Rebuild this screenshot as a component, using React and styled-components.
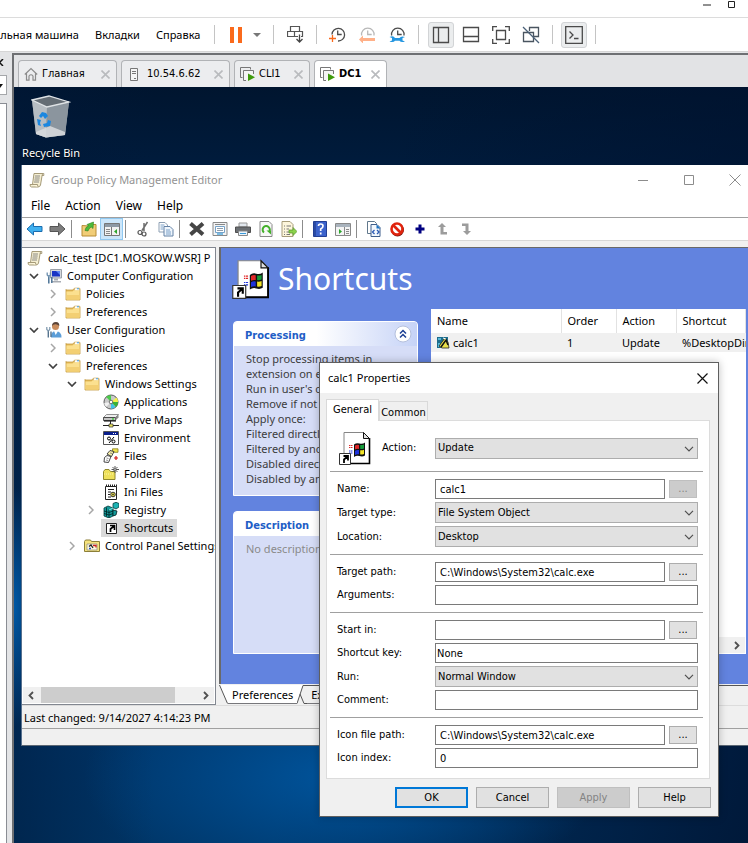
import React from "react";
import styled, { createGlobalStyle, css } from "styled-components";

const UI = `"Noto Sans", "Open Sans", sans-serif`;
const DLG = `"DejaVu Sans Condensed", "DejaVu Sans", sans-serif`;

const Global = createGlobalStyle`
  * { box-sizing: border-box; }
  body { margin: 0; background: #e3e4e6; overflow: hidden; font: 11px/18px ${UI}; color: #000; }
  button, input, select { font: inherit; color: inherit; margin: 0; }
  ul { list-style: none; margin: 0; padding: 0; }
`;

/* ---------- host application chrome ---------- */
const Shell = styled.div`
  display: flex; flex-direction: column; height: 100vh; overflow: hidden;
`;
const HostTitle = styled.header`
  display: flex; justify-content: flex-end; gap: 17px; height: 18px; flex: none; padding-right: 12px;
  background: #fff; border-bottom: 1px solid #dcdcdc;
`;
const HostBar = styled.div`
  display: flex; align-items: center; height: 34px; flex: none; background: #fff; border-bottom: 1px solid #d6d6d6;
  white-space: nowrap; overflow: hidden;
`;
const HostMenu = styled.nav`
  display: flex; gap: 16px; width: 213px; height: 32px; align-items: center;
`;
const HostMenuItem = styled.button`
  border: 0; background: none; padding: 0; flex: none;
`;
const CutMenuItem = styled(HostMenuItem)`
  display: flex; width: 79px; justify-content: flex-end; overflow: hidden;
`;
const HostSep = styled.span`
  width: 1px; height: 19px; flex: none; background: #c4c4c4; margin: 0 ${p => p.$after || 9}px 0 ${p => p.$before || 9}px;
`;
const HostTool = styled.button`
  display: flex; align-items: center; justify-content: center; flex: none; padding: 0;
  width: ${p => p.$w || 30}px; height: 26px; border: 0; background: none; border-radius: 3px;
  ${p => p.$on && css`background: #ebedee; border: 1px solid #d2d4d6; width: 26px; margin: 0 2px;`}
`;
const Main = styled.div`display: flex; flex: 1; padding-top: 1px; min-height: 0;`;
const Side = styled.aside`
  width: 7px; flex: none; display: flex; flex-direction: column; padding-top: 6px; overflow: hidden;
`;
const SideBox = styled.div`
  height: 20px; margin-top: 9px; background: #fff; border: 1px solid #a5a7aa; border-left: 0;
`;
const SidePanel = styled.div`
  flex: 1; margin-top: 8px; background: #fff; border: 1px solid #8a8d94; border-left: 0; border-bottom: 0;
`;
const Viewer = styled.main`
  flex: 1; min-width: 0; margin-left: 5px; display: flex; flex-direction: column;
  border: 2px solid #6e7073; border-right: 0; border-bottom: 0;
`;
const Tabs = styled.div`
  display: flex; gap: 4px; padding: 5px 4px 0; background: #e2e3e5;
  font: 11px/14px ${DLG};
`;
const Tab = styled.div`
  display: flex; align-items: center; width: ${p => p.$w}px; height: 27px; padding: 0 6px 0 5px; gap: 4px;
  border: 1px solid #b1b3b6; border-bottom: 0; border-radius: 4px 4px 0 0;
  background: ${p => (p.$on ? "#fff" : "#ecedef")}; font-weight: ${p => (p.$on ? 700 : 400)};
`;
const TabLabel = styled.button`
  display: flex; align-items: center; gap: ${p => p.$gap || 4}px; border: 0; background: none; padding: 0;
  font-weight: inherit; white-space: nowrap; flex: 1;
`;
const IconButton = styled.button`
  display: flex; border: 0; background: none; padding: 0;
`;

/* ---------- guest desktop ---------- */
const Desktop = styled.section`
  position: relative; flex: 1; overflow: hidden;
  background:
    radial-gradient(ellipse 260px 120px at 330px 690px, #00549c 0%, transparent 100%),
    radial-gradient(ellipse 26px 120px at 0 520px, #0059a6 0%, transparent 100%),
    linear-gradient(90deg, rgba(0, 24, 56, 0.5) 0, transparent 140px),
    linear-gradient(100deg, transparent 45%, rgba(0, 18, 47, 0.8) 100%),
    linear-gradient(180deg, #00152f 0, #001f44 120px, #00356a 620px, #003566 100%);
`;
const DesktopIcon = styled.button`
  display: flex; flex-direction: column; align-items: center; width: 74px; padding: 8px 0 0; border: 0;
  background: none; color: #fff; gap: 6px; line-height: 16px; white-space: nowrap;
  text-shadow: 0 1px 1px #000;
`;
const Window = styled.section`
  position: absolute; left: 7px; right: 0; top: 78px; background: #f0f0f0;
  border-bottom: 1px solid #5a6673; border-left: 1px solid #56708e;
`;
const TitleBar = styled.header`
  display: flex; align-items: center; height: 30px; padding: 0 7px; background: #fff; color: #939393;
`;
const TitleText = styled.h1`
  flex: 1; margin: 0 0 0 6px; font-size: 11px; font-weight: 400; white-space: nowrap;
`;
const Caption = styled.div`display: flex; gap: 34px;`;
const MenuBar = styled.nav`
  display: flex; gap: 15px; height: 23px; padding: 0 9px; align-items: center; background: #fff;
  border-bottom: 1px solid #a0a0a0;
`;
const MenuItem = styled.button`border: 0; background: none; padding: 0; font-size: 12px;`;
const ToolBar = styled.div`
  display: flex; align-items: center; height: 23px; padding-left: 1px; background: #fff;
  border-bottom: 1px solid #d7d7d7;
`;
const Tool = styled.button`
  display: flex; align-items: center; justify-content: center; width: 23px; height: 22px; flex: none;
  padding: 0; border: 1px solid ${p => (p.$on ? "#90c8f0" : "transparent")};
  background: ${p => (p.$on ? "#cce6fa" : "none")};
`;
const ToolSep = styled.span`width: 1px; height: 18px; margin: 0 5px 0 2px; background: #8c8c8c;`;
const Panes = styled.div`display: flex; height: 458px; margin-top: 6px;`;
const TreePane = styled.div`
  display: flex; flex-direction: column; width: 194px; flex: none; background: #fff; border: 1px solid #828790;
  border-left: 0; overflow: hidden;
`;
const Tree = styled.ul`flex: 1; padding-top: 1px; overflow: hidden;`;
const TreeRow = styled.li`
  display: flex; height: 18px; align-items: center;
  padding-left: ${p => (p.$level ? (p.$level - 1) * 19 + 2 : 3)}px;
`;
const Twisty = styled.span`display: flex; justify-content: center; width: 20px; flex: none;`;
const TreeItem = styled.button`
  display: flex; align-items: center; gap: 5px; height: 18px; padding: 0 4px 0 2px; border: 0; white-space: nowrap;
  background: ${p => (p.$on ? "#d9d9d9" : "none")};
`;
const HScroll = styled.div`
  display: flex; height: 16px; margin: 0 1px 1px; padding: 0 5px; align-items: center; background: #f0f0f0; flex: none;
  justify-content: ${p => (p.$end ? "flex-end" : "space-between")};
`;
const Thumb = styled.div`flex: 1; height: 16px; margin: 0 28px 0 7px; background: #cdcdcd;`;
const Detail = styled.div`flex: 1; min-width: 0; margin-left: 3px; display: flex; flex-direction: column;`;
const Blue = styled.div`
  flex: 1; background: #6283df; border-top: 1px solid #696969; border-left: 2px solid #696969;
  padding: 10px 2px 30px 11px; display: flex; flex-direction: column;
`;
const Banner = styled.div`
  display: flex; align-items: center; gap: 8px; height: 42px; color: #fff;
`;
const BannerText = styled.h2`margin: 0; font-size: 30px; line-height: 40px; font-weight: 400;`;
const BlueRow = styled.div`display: flex; flex: 1; gap: 13px; margin: 9px 0 0 1px;`;
const Cards = styled.div`display: flex; flex-direction: column; gap: 15px; width: 185px; flex: none; padding-top: 12px;`;
const Card = styled.section`
  display: flex; flex-direction: column; border: 1px solid #fff; border-radius: 4px 4px 0 0; background: #d6ddf7;
  ${p => p.$grow && css`flex: 1;`}
`;
const CardHead = styled.header`
  display: flex; align-items: center; justify-content: space-between; height: 24px; padding: 0 5px 0 11px;
  background: linear-gradient(90deg, #fff 45%, #c6d3f7); border-radius: 3px 3px 0 0;
`;
const CardTitle = styled.h3`margin: 0; padding-top: 3px; font: 700 11px/16px ${DLG}; color: #215dc6;`;
const CardBody = styled.div`
  padding: 5px 0 9px 12px; line-height: 15px; color: ${p => (p.$dim ? "#8a8a8a" : "#3c3c3c")};
  white-space: nowrap; overflow: hidden;
`;
const CardLine = styled.div`height: 15px;`;
const ListPane = styled.div`flex: 1; min-width: 0; overflow: hidden; background: #fff; display: flex; flex-direction: column;`;
const ListScroll = styled.div`flex: 1; overflow: hidden;`;
const Table = styled.table`
  width: 100%; border-collapse: collapse; table-layout: fixed; white-space: nowrap;
`;
const Th = styled.th`
  width: ${p => p.$w || "auto"}; height: 24px; padding: 0 6px; text-align: left; font-weight: 400;
  border-right: 1px solid #e2e2e2;
`;
const Td = styled.td`
  height: 19px; padding: 0 0 0 6px; background: #f0f0f0; line-height: 18px;
`;
const NameCell = styled.span`display: flex; align-items: center; gap: 3px;`;
const BottomTabs = styled.div`display: flex; height: 21px; padding-top: 1px; background: #f0f0f0;`;
const BottomTab = styled.button`
  display: flex; height: 19px; border: 0; padding: 0; background: none; line-height: 18px;
`;
const BottomTabText = styled.span`
  background: ${p => (p.$on ? "#fff" : "#f0f0f0")}; padding: 0 4px; border-bottom: 1px solid #77777b;
  border-top: 1px solid ${p => (p.$on ? "#fff" : "#555")};
`;
const BottomRest = styled.div`flex: 1; border-top: 1px solid #555;`;
const Status = styled.footer`
  height: 24px; padding: 3px 2px; border-top: 1px solid #dcdcdc; border-bottom: 1px solid #a0a0a0;
`;
const StatusRest = styled.div`height: 16px;`;

/* ---------- properties dialog ---------- */
const Dialog = styled.section`
  position: absolute; left: 305px; top: 275px; width: 400px; background: #f0f0f0; border: 1px solid #5f5f5f;
  font: 11px/16px ${DLG}; box-shadow: 0 0 8px rgba(0, 0, 0, 0.25);
`;
const DialogTitle = styled.header`
  display: flex; align-items: center; justify-content: space-between; height: 30px; padding: 0 10px 0 8px;
  background: #fff; font-family: ${UI};
`;
const DialogTabs = styled.div`display: flex; align-items: flex-end; height: 27px; padding-left: 6px;`;
const DialogTab = styled.button`
  height: 19px; width: 49px; padding: 3px 0 0; border: 1px solid #d9d9d9; border-bottom: 0;
  background: #f0f0f0; text-align: center; white-space: nowrap;
  ${p => p.$on && css`margin-bottom: -1px; width: 53px; height: 22px; padding: 0 0 1px; background: #fff; z-index: 1;`}
`;
const Page = styled.form`
  margin: 0 8px 0 6px; padding: 0 11px 10px 3px; background: #fff; border: 1px solid #dcdcdc;
`;
const Group = styled.div`
  display: flex; flex-direction: column; gap: 3px; padding: 7px 5px 7px 7px; margin-right: -5px;
  border-top: 1px solid #a0a0a0;
  &:last-child { padding-bottom: 0; }
`;
const HeadGroup = styled(Group)`border-top: 0; padding-top: 10px; padding-bottom: 6px;`;
const Field = styled.div`
  display: grid; grid-template-columns: ${p => (p.$pic ? "43px 53px" : "98px")} 1fr; align-items: center;
  padding-left: ${p => (p.$pic ? 2 : 0)}px;
`;
const Label = styled.label`line-height: 20px;`;
const Controls = styled.div`display: flex; align-items: center; gap: 4px; position: relative;`;
const TextInput = styled.input`
  flex: 1; min-width: 0; height: 20px; padding: 0 ${p => (p.$tight ? 1 : 4)}px; border: 1px solid #7a7a7a; background: #fff; outline: none; border-radius: 0;
`;
const Select = styled.select`
  appearance: none; flex: 1; height: 21px; padding: 0 2px; border: 1px solid #adadad; background: #e1e1e1; border-radius: 0;
`;
const SelectArrow = styled.span`position: absolute; right: 4px; top: 8px; display: flex; pointer-events: none;`;
const Browse = styled.button`
  width: 28px; height: 18px; padding: 0; margin-right: 1px; border: 1px solid #adadad; background: #e1e1e1; line-height: 14px;
  &:disabled { background: #ccc; border-color: #bfbfbf; color: #838383; }
`;
const Footer = styled.footer`display: flex; justify-content: flex-end; gap: 8px; padding: 8px 7px;`;
const PushButton = styled.button`
  width: 73px; height: 21px; padding: 0; border: ${p => (p.$main ? "2px solid #0078d7" : "1px solid #adadad")};
  background: #e1e1e1; line-height: 16px;
  &:disabled { background: #ccc; border-color: #bfbfbf; color: #838383; }
`;

/* ---------- icons ---------- */
const Svg = ({ s = 16, w, h, vb, children }) => (
  <svg width={w || s} height={h || s} viewBox={vb || `0 0 ${w || s} ${h || s}`} fill="none" aria-hidden="true">{children}</svg>
);
const Cross = ({ s = 11, c = "#8c8c8c", w = 1 }) => (
  <Svg s={s}><path d={`M.5.5L${s - 0.5} ${s - 0.5}M${s - 0.5} .5L.5 ${s - 0.5}`} stroke={c} strokeWidth={w} /></Svg>
);
const Chevron = ({ open, c }) => open
  ? <Svg w={10} h={6}><path d="M1 1l4 4 4-4" stroke={c || "#404040"} strokeWidth="1.7" /></Svg>
  : <Svg w={6} h={10}><path d="M1 1l4 4-4 4" stroke={c || "#a6a6a6"} strokeWidth="1.5" /></Svg>;
const ScrollArrow = ({ left }) => (
  <Svg w={6} h={9}><path d={left ? "M5 1L1.500 4.500 5 8" : "M1 1l3.500 3.500L1 8"} stroke="#505050" strokeWidth="1.8" /></Svg>
);
const Scroll = () => (
  <Svg>
    <path d="M5 1.500h9.500q-1.500.5-1.500 2.500L11.500 13q-.5 2-2.500 2H2.500Q1 15 1 12.500h2.500z" fill="#f6efd2" stroke="#a59a78" />
    <path d="M1 12.500h7.500q0 2 1 2.500" stroke="#a59a78" fill="#fff8dd" />
    <path d="M6 4h5M5.700 6h5M5.400 8h5M5 10h5" stroke="#8a8a86" />
    <path d="M13 3.500h1.800V1.500" stroke="#a59a78" />
  </Svg>
);
const Folder = () => (
  <Svg>
    <path d="M1 3.500V14h14V2.500H9L8 4H1z" fill="#e7bd5a" stroke="#c49a3f" strokeWidth=".8" />
    <path d="M9.500 2h5v3h-5z" fill="#fff" stroke="#cba85a" strokeWidth=".6" /><path d="M12 2.300h2v1h-2z" fill="#3f9be0" />
    <path d="M1.400 5.500h6L9 4.300h5.600v9.300H1.400z" fill="#fbe08f" /><path d="M2 9h12.500v4.500H2z" fill="#f3cf73" />
  </Svg>
);
const Computer = () => (
  <Svg>
    <path d="M4.500 1.500h11v8.500h-11z" fill="#d5d8dc" stroke="#9aa0a8" /><path d="M6 3h8v5.500H6z" fill="#1a35c4" /><path d="M10 3h4v4z" fill="#5e86f2" />
    <path d="M8 10.500h4v2H8zM6 13h9v1.500H6z" fill="#a9adb4" />
    <path d="M2.800 9v6.500M5.800 9v6" stroke="#4d7396" strokeWidth="1.500" />
    <path d="M1.200 4.500v2.500l1.600 1.500 1.600-1.500V4.500" stroke="#6d8fae" strokeWidth="1.300" />
  </Svg>
);
const User = () => (
  <Svg>
    <circle cx="9.500" cy="4.500" r="3.500" fill="#c98c5d" /><path d="M6 4q0-4 4-4 3.500 0 3.300 4-2-2-4-1.800Q7 2.500 6 4z" fill="#594338" />
    <path d="M5 15.500Q5 9 9.500 9q6 0 6 6.500z" fill="#5c9ed8" /><path d="M8 9l1.700 4L12 9z" fill="#fff" />
    <path d="M2.300 9v6.500M5 9.500v5.500" stroke="#55738d" strokeWidth="1.400" />
    <path d="M.8 5v2.500L2.300 9l1.500-1.500V5" stroke="#7b95ab" strokeWidth="1.200" />
  </Svg>
);
const Disc = () => (
  <Svg>
    <circle cx="8" cy="8" r="7" fill="#c8c8c8" stroke="#5c5c5c" />
    <path d="M8 8L3 2.800A7 7 0 018 1.200z" fill="#4bcb4b" /><path d="M8 8l5.500-4.500A7 7 0 0115 8z" fill="#f4f04a" />
    <path d="M8 8l4.500 5A7 7 0 018 14.800z" fill="#3ec3e8" /><path d="M8 8l5 5q2-2 2-5z" fill="#38b338" /><path d="M8 8L1.200 9q0 2 2 4z" fill="#f0f0f0" />
    <circle cx="8" cy="8" r="1.800" fill="#fff" stroke="#555" strokeWidth=".8" />
  </Svg>
);
const Drive = () => (
  <Svg>
    <path d="M3.500 2.500h12l-3 3H.5z" fill="#eee" stroke="#777" strokeWidth=".8" /><path d="M.5 5.500h12v3H.5z" fill="#c4c4c4" stroke="#333" strokeWidth=".8" />
    <path d="M12.500 5.500l3-3v3l-3 3z" fill="#888" /><path d="M9 7h2" stroke="#0c0" /><path d="M1 9h12" stroke="#000" />
    <path d="M7.500 9v3M0 13.500h6M10 13.500h6" stroke="#222" /><path d="M6 12h4v3H6z" fill="#e7e05c" stroke="#333" strokeWidth=".7" />
  </Svg>
);
const Env = () => (
  <Svg>
    <path d="M.5 1.500h15v13H.5z" fill="#fff" stroke="#555" /><path d="M1 2h14v3H1z" fill="#0a1e8c" /><path d="M10 3.500h1M12 3.500h1" stroke="#fff" />
    <circle cx="6" cy="8.500" r="1.500" stroke="#000" /><circle cx="10.500" cy="11.500" r="1.500" stroke="#000" /><path d="M11 7l-5 6" stroke="#000" />
  </Svg>
);
const Files = () => (
  <Svg>
    <path d="M9.500 .8h5.500v3.500H9.500z" fill="#f1e44e" stroke="#857c1d" strokeWidth=".8" />
    <path d="M1.500 9.500l2.500-2 4 1-2.500 6-4.500-.500z" fill="#fff" stroke="#333" strokeWidth=".9" />
    <path d="M4 6l3-3.500 4 1L8.500 8.500z" fill="#f6eeaa" stroke="#333" strokeWidth=".9" />
    <path d="M3.500 10l2 .5M3 12l2 .5M7 5l2 .500" stroke="#777" strokeWidth=".8" />
    <path d="M11 10h4M13 8v4" stroke="#d21414" strokeWidth="1.200" />
  </Svg>
);
const NewFolder = () => (
  <Svg>
    <path d="M.5 13.500v-8l1.500-2h4l1.500 2h4.500v8z" fill="#eee05a" stroke="#90882c" /><path d="M1 8h10" stroke="#fbf6b0" strokeDasharray="1 1" />
    <path d="M12 0v7M8.500 3.500H16M9.500 1l5 5M14.500 1l-5 5" stroke="#444" strokeWidth=".9" /><path d="M11.500 3h1v1h-1z" fill="#fff" />
  </Svg>
);
const Ini = () => (
  <Svg>
    <path d="M2.500 2.500h11v13h-11z" fill="#fff" stroke="#222" /><path d="M3 1.500h11" stroke="#222" strokeWidth="2" strokeDasharray="1 1" />
    <path d="M5 5.500h6M5 8h3M5 10.500h2M5 13h3" stroke="#222" /><circle cx="10" cy="10.500" r="2.300" fill="#e8dc42" stroke="#333" /><path d="M10 9.500v2M9 10.500h2" stroke="#333" strokeWidth=".7" />
  </Svg>
);
const Registry = () => (
  <Svg>
    <path d="M1 6l4-2 5 2v8l-4 2-5-2z" fill="#139a9a" stroke="#043c3c" strokeWidth=".8" /><path d="M10 1.500l3-1.200L16 1.500v3.500L13 7l-3-1.500z" fill="#1cb3b3" stroke="#043c3c" strokeWidth=".8" />
    <path d="M10 8l4 1-1 4-3 1z" fill="#139a9a" />
    <path d="M6 7.500V16M3.500 5.500v9M1 9l5 1.500L10 9M1 11.500L6 13l4-1.500M10 8l4 1-1 4-3 1z" stroke="#022" strokeWidth=".8" />
    <path d="M6 8l4-2" stroke="#7fe8e8" />
  </Svg>
);
const ShortcutIcon = () => (
  <Svg>
    <path d="M3.500 3.500h10v10h-10z" fill="#fff" stroke="#222" /><path d="M7 5.500h4.500V10M11 6L7.500 9v3" stroke="#000" strokeWidth="1.700" />
  </Svg>
);
const ControlPanel = () => (
  <Svg>
    <path d="M.5 13.500v-10l1-1.500h5l1 1.500h8v10z" fill="#f5e27c" stroke="#8c7f38" /><path d="M3 6h10v6H3z" fill="#fffbe0" stroke="#888" strokeWidth=".7" />
    <path d="M5 8.500l2-1.500 2 3" stroke="#222" strokeWidth="1.300" /><path d="M9 7.500h3v2" stroke="#c22" strokeWidth="1.300" /><path d="M5 10.500h2" stroke="#2358c8" strokeWidth="1.300" />
  </Svg>
);
const CalcIcon = () => (
  <Svg s={13}>
    <path d="M0 1h11v11H0z" fill="#1d6d8c" /><path d="M1 2h3v2H1zM1 7h2v4H1z" fill="#58b8d8" /><path d="M2 10L8 2l3 4 1 6H5z" fill="#e8e04a" stroke="#222" strokeWidth=".8" />
    <path d="M4 11l5-7 2 5" stroke="#111" strokeWidth="1.500" /><path d="M6 2l3 1" stroke="#fff" />
  </Svg>
);
const FlagPage = ({ w, h }) => (
  <Svg w={w} h={h} vb="0 0 32 34">
    <path d="M5 1.500h19.500l6 6V32.500H5z" fill="#fff" stroke="#868686" />
    <path d="M30.500 7v25.500H7" stroke="#000" strokeWidth="1.600" /><path d="M24.500 1.500v6h6z" fill="#e0e0e0" stroke="#111" />
    <path d="M15 13.500q2.500-2 5.500-1t5.500-1v13q-2.500 1.500-5.500.5t-5.500 1z" fill="#111" />
    <path d="M16 14.500q2-1.200 4-.6v4q-2-.5-4 .6z" fill="#e02828" />
    <path d="M21.200 14q2 .3 3.800-.5v4q-1.800.8-3.800.5z" fill="#169c3a" />
    <path d="M16 19.700q2-1.200 4-.6v4.200q-2-.5-4 .6z" fill="#1d32dc" />
    <path d="M21.200 19.200q2 .3 3.800-.5v4.200q-1.800.8-3.800.5z" fill="#f3e526" />
    <path d="M10 14.500h4M10 16.500h4" stroke="#e02828" strokeDasharray="1 .5 2 .5" />
    <path d="M10 20h4M10 22h4" stroke="#1d32dc" strokeDasharray="1 .5 2 .5" />
    <path d="M.5 22.500h11v11H.5z" fill="#fff" stroke="#333" /><path d="M4.500 25h4.500v4.500M8.500 25.500L5 28.500v3.500" stroke="#000" strokeWidth="1.800" />
  </Svg>
);
const RecycleBin = () => (
  <Svg w={40} h={44}>
    <path d="M1 5l17-4 20 6-4 33-19 2.500L5 39z" fill="#9aa3ab" /><path d="M1 5l15 7-1 30.500L5 39z" fill="#b6bdc3" />
    <path d="M16 12l22-5-4 33-19 2.500z" fill="#8b959e" /><path d="M1 5l17-4 20 6-22 5z" fill="#646d75" stroke="#dfe3e6" strokeWidth="1.300" />
    <path d="M5 37l14-6 15 6v3l-19 2.500L5 39z" fill="#d9dcde" opacity=".85" />
    <path d="M8 21l3-4 4 1 2 3-3 3-2-3-2 2zM6 24l4 1-1 3 1 3-3-1zM13 32l6-1 1-5-3-1-1 3-4 1z" fill="#1b87e0" />
  </Svg>
);
const HomeIcon = () => (
  <Svg s={14}><path d="M.8 7.500L7 1.500l6.200 6M2.500 6.500v6.700h2.500V9q2-2.500 4 0v4.200h2.500V6.500" stroke="#8c8c8c" strokeWidth="1.200" /></Svg>
);
const ServerIcon = () => (
  <Svg w={14} h={13}><path d="M3.500.5h7v12h-7z" stroke="#777" fill="#f5f5f5" /><path d="M5 3.500h4M5 5.500h4M7 10.500h2" stroke="#777" /></Svg>
);
const VmIcon = () => (
  <Svg w={15} h={14}>
    <path d="M2.500 10.500h-2v-10h10v2" stroke="#777" /><path d="M6 13.500H3.500v-10h10V7" stroke="#777" fill="#f4f4f4" /><path d="M8 6.500v7.500l7-3.800z" fill="#3f9a0c" />
  </Svg>
);
const PauseIcon = () => <Svg w={12} h={16}><path d="M0 0h4v16H0zM8 0h4v16H8z" fill="#fa6a1c" /></Svg>;
const Caret = () => <Svg w={8} h={4}><path d="M0 0h8L4 4z" fill="#777" /></Svg>;
const SendKeys = () => (
  <Svg w={17} h={17}><path d="M3.500 .5h9v5h-9zM.5 5.500h7v5h-7zM7.500 5.500h8v5h-8z" stroke="#555" strokeWidth="1.200" /><path d="M12.500 8v8M9.500 12.500l3 3 3-3" stroke="#fff" strokeWidth="3" /><path d="M12.500 8.500v7.500M9.500 13l3 3 3-3" stroke="#444" strokeWidth="1.300" /></Svg>
);
const Clock = ({ tone = "#4c4c4c", kind }) => (
  <Svg w={17} h={17}>
    <path d={kind === "add" ? "M3 8.500A6.300 6.300 0 119 15" : "M2.600 9.500A6.300 6.300 0 1115 9.500"} stroke={tone} strokeWidth="1.300" /><path d="M8.700 4.500v4h4" stroke={tone} strokeWidth="1.300" />
    {kind === "add" && <path d="M0 12.500h7M3.500 9v7" stroke="#fa6a1c" strokeWidth="1.300" />}
    {kind === "back" && <path d="M0 13.500l4-4v2.500h12v3H4v2.500z" fill="#ffb088" />}
    {kind === "manage" && <path d="M.500 11q4-1.800 5.500 1h4.500q1.500-2.500 5.500-1l-2.500 1v2.500l2.500 1q-4 1.500-5.500-.8H6q-1.500 2.300-5.500.8l2.500-1V12z" fill="#2496e0" />}
  </Svg>
);
const Frame = ({ d }) => <Svg w={18} h={18}><path d={d} stroke="#4a4a4a" strokeWidth="1.300" /></Svg>;
const Unity = () => (
  <Svg w={18} h={18}><path d="M7.500 5V1.500h9v9H12M1.500 6.500h10v9h-10z" stroke="#4a5560" strokeWidth="1.300" /><path d="M1 1l16 16" stroke="#4a6078" strokeWidth="1.200" /></Svg>
);

const Arrow = ({ right }) => right
  ? <Svg w={17} h={14}><path d="M16 7L9.500 1v3.500H1v5h8.500V13z" fill="#7d7d7d" stroke="#555" /></Svg>
  : <Svg w={17} h={14}><path d="M1 7l6.500-6v3.500H16v5H7.500V13z" fill="#3fb0f0" stroke="#1b6cae" /></Svg>;
const toolIcons = {
  back: <Arrow />,
  forward: <Arrow right />,
  up: <Svg><path d="M1 4.500V15h14V3.500H9L8 5z" fill="#f1cd77" stroke="#b78c35" /><path d="M4 9.500l1-3 2.500-1.500L6 3.500 12.500 1l-.5 6.500-1.800-1.500q-2.500 1.500-3.200 4z" fill="#4dbb3a" stroke="#2c7f20" strokeWidth=".6" /></Svg>,
  tree: <Svg><path d="M.5 2.500h15v12H.5z" fill="#f2f2f2" stroke="#777" /><path d="M1 3h14v3H1z" fill="#8d99a5" /><path d="M2 8.500h4M2 10.500h4M2 12.500h4" stroke="#8a8a8a" /><path d="M7.500 6v8" stroke="#777" /><path d="M13 8v5l-3-2.500z" fill="#2ba52b" /></Svg>,
  cut: <Svg><path d="M12.500 1L7 9.500M9 2v8" stroke="#6d6d6d" strokeWidth="1.500" /><circle cx="5" cy="11.500" r="2" stroke="#555" strokeWidth="1.200" /><circle cx="9" cy="13" r="2" stroke="#555" strokeWidth="1.200" /></Svg>,
  copy: <Svg><path d="M1 1.500h6l2.500 2.500v7H1z" fill="#fff" stroke="#8ea0b4" /><path d="M6 5.500h6l3 3v6.500H6z" fill="#eef5fc" stroke="#6482a6" /><path d="M2.500 4h4M2.500 6h3M2.500 8h3M8 9h4M8 11h5M8 13h5" stroke="#7aa0c8" /></Svg>,
  del: <Svg><path d="M1.500 2.500L14 13.500M14 2.500L1.500 13.500" stroke="#454545" strokeWidth="4" /></Svg>,
  props: <Svg><path d="M1 1.500h14v13H1z" fill="#f4f4f4" stroke="#888" /><path d="M3 3.500h10" stroke="#888" /><path d="M3.500 5.500h9v6h-9z" fill="#fff" stroke="#77a3c8" /><path d="M5 7.500h6M5 9.500h6" stroke="#8f9dab" /><path d="M5 13h6" stroke="#53a8dc" strokeWidth="1.500" /></Svg>,
  print: <Svg><path d="M4 2h8v4H4z" fill="#e2e8ee" stroke="#999" /><path d="M.5 6h15v5.500H.5z" fill="#6b6f73" stroke="#505050" /><path d="M3.500 10h9v4.500h-9z" fill="#eaf4fc" stroke="#888" /><path d="M5 12.500h6" stroke="#3b9ada" /></Svg>,
  refresh: <Svg><path d="M2 .5h9l3 3v12H2z" fill="#f8f8f8" stroke="#888" /><path d="M6 11.500a3.600 3.600 0 115-.5" stroke="#43b02a" strokeWidth="2" /><path d="M8.500 9.500h4.500v4z" fill="#43b02a" /></Svg>,
  exp: <Svg><path d="M1 .5h8l3 3v12H1z" fill="#fdf6dc" stroke="#a79c7a" /><path d="M3 5h1M5.500 5H10M3 8h1M5.500 8H8M3 11h1M5.500 11H8M3 13.500h1M5.500 13.500H9" stroke="#777" /><path d="M8 9h4V6.500l4 4-4 4V12H8z" fill="#8bd24a" stroke="#56942a" strokeWidth=".7" /></Svg>,
  help: <Svg><path d="M1.500.5h13v15h-13z" fill="#3c63cc" stroke="#233f94" /><path d="M2 1h2v14H2z" fill="#2a4aa4" /><path d="M6.500 5q0-2 2.200-2Q11 3 11 5t-2.300 3v2M8.700 11.500v2" stroke="#fff" strokeWidth="1.700" /></Svg>,
  action: <Svg><path d="M.5 2.500h15v12H.5z" fill="#f4f4f4" stroke="#888" /><path d="M1 3h14v3H1z" fill="#a9b3bd" /><path d="M9.500 6v8M11 8.500h3M11 10.500h3M11 12.500h3" stroke="#8a8a8a" /><path d="M4 8v5l3-2.500z" fill="#2ba52b" /></Svg>,
  xml: <Svg><path d="M1.500.5h7l2 2v10h-9z" fill="#fff" stroke="#61788c" /><path d="M5 3.500h6l3 3v9H5z" fill="#f3f8fd" stroke="#3f5f8c" /><path d="M10.500 3.500l4 4h-4z" fill="#1a71c2" /><path d="M8.500 9l-2 2 2 2M11 9l2 2-2 2" stroke="#2b5bb5" strokeWidth="1.300" /></Svg>,
  stop: <Svg><circle cx="8.500" cy="9" r="6.500" fill="#7a1a14" /><circle cx="8" cy="8" r="5.500" fill="#fff" stroke="#e0240e" strokeWidth="2.600" /><path d="M4 4l8 8" stroke="#e0240e" strokeWidth="2.600" /></Svg>,
  plus: <Svg><path d="M8 3.500v9M3.500 8h9" stroke="#000080" strokeWidth="3" /></Svg>,
  arrowUp: <Svg><path d="M7 2l4 4H8.500v5H12v2.500H5.500V6H3z" fill="#9c9c9c" /></Svg>,
  arrowDown: <Svg><path d="M9 14L5 10h2.500V5H4V2.500h6.500V10H13z" fill="#9c9c9c" /></Svg>,
};
const tools = ["back", "forward", "|", "up", "tree", "|", "cut", "copy", "|", "del", "props", "print", "refresh", "exp", "|", "help", "action", "|", "xml", "stop", "plus", "arrowUp", "arrowDown"];

const treeData = [
  ["root", 0, null, Scroll, "calc_test [DC1.MOSKOW.WSR] P"],
  ["computer", 1, true, Computer, "Computer Configuration"],
  ["c-policies", 2, false, Folder, "Policies"],
  ["c-preferences", 2, false, Folder, "Preferences"],
  ["user", 1, true, User, "User Configuration"],
  ["u-policies", 2, false, Folder, "Policies"],
  ["u-preferences", 2, true, Folder, "Preferences"],
  ["windows", 3, true, Folder, "Windows Settings"],
  ["apps", 4, null, Disc, "Applications"],
  ["drives", 4, null, Drive, "Drive Maps"],
  ["env", 4, null, Env, "Environment"],
  ["files", 4, null, Files, "Files"],
  ["folders", 4, null, NewFolder, "Folders"],
  ["ini", 4, null, Ini, "Ini Files"],
  ["registry", 4, false, Registry, "Registry"],
  ["shortcuts", 4, null, ShortcutIcon, "Shortcuts"],
  ["control", 3, false, ControlPanel, "Control Panel Settings"],
];

const TextField = ({ id, label, value = "", browse, disabled, tight }) => (
  <Field>
    <Label htmlFor={id}>{label}</Label>
    <Controls>
      <TextInput id={id} defaultValue={value} $tight={tight} />
      {browse && <Browse type="button" disabled={disabled} aria-label={`Browse ${label}`}>...</Browse>}
    </Controls>
  </Field>
);
const SelectBox = ({ id, value }) => (
  <Controls>
    <Select id={id} defaultValue={value}><option>{value}</option></Select>
    <SelectArrow><Svg w={10} h={6}><path d="M1 .8l4 4 4-4" stroke="#505050" strokeWidth="1.200" /></Svg></SelectArrow>
  </Controls>
);
const SelectField = ({ id, label, value }) => (
  <Field><Label htmlFor={id}>{label}</Label><SelectBox id={id} value={value} /></Field>
);

const Slant = ({ kind }) => {
  if (kind === "start") return <Svg w={9} h={19}><path d="M0 0h9v19z" fill="#fff" /><path d="M.5 0l8 18.500" stroke="#555" /></Svg>;
  return (
    <Svg w={10} h={19}>
      <path d="M0 0h6L0 19z" fill="#fff" />
      <path d="M0 18.500L6 .5h4M3 9l4 9.500h3" stroke="#555" />
    </Svg>
  );
};

function PolicyWindow() {
  return (
    <Window>
      <TitleBar>
        <Scroll />
        <TitleText>Group Policy Management Editor</TitleText>
        <Caption>
          <IconButton aria-label="Minimize"><Svg s={12}><path d="M1 6.500h10" stroke="#8c8c8c" /></Svg></IconButton>
          <IconButton aria-label="Maximize"><Svg s={12}><path d="M1.500 1.500h9v9h-9z" stroke="#8c8c8c" /></Svg></IconButton>
          <IconButton aria-label="Close window"><Cross s={12} /></IconButton>
        </Caption>
      </TitleBar>
      <MenuBar>{["File", "Action", "View", "Help"].map(m => <MenuItem key={m}>{m}</MenuItem>)}</MenuBar>
      <ToolBar>
        {tools.map((t, i) => t === "|" ? <ToolSep key={i} /> : <Tool key={i} $on={t === "tree"} aria-label={t}>{toolIcons[t]}</Tool>)}
      </ToolBar>
      <Panes>
        <TreePane>
          <Tree>
            {treeData.map(([id, level, open, Icon, text]) => (
              <TreeRow key={id} $level={level}>
                {level > 0 && <Twisty>{open !== null && <Chevron open={open} />}</Twisty>}
                <TreeItem $on={id === "shortcuts"}><Icon />{text}</TreeItem>
              </TreeRow>
            ))}
          </Tree>
          <HScroll><ScrollArrow left /><Thumb /><ScrollArrow /></HScroll>
        </TreePane>
        <Detail>
          <Blue>
            <Banner><FlagPage w={38} h={40} /><BannerText>Shortcuts</BannerText></Banner>
            <BlueRow>
              <Cards>
                <Card>
                  <CardHead>
                    <CardTitle>Processing</CardTitle>
                    <IconButton aria-label="Collapse">
                      <Svg s={18}><circle cx="9" cy="9" r="8" fill="#fff" stroke="#b5c0dd" /><path d="M6 8.500l3-3 3 3M6 12.500l3-3 3 3" stroke="#1c3f94" strokeWidth="1.500" /></Svg>
                    </IconButton>
                  </CardHead>
                  <CardBody>
                    {["Stop processing items in", "extension on error:", "Run in user's context:", "Remove if not applied:", "Apply once:", "Filtered directly:", "Filtered by ancestor:", "Disabled directly:", "Disabled by ancestor:"].map(l => <CardLine key={l}>{l}</CardLine>)}
                  </CardBody>
                </Card>
                <Card $grow>
                  <CardHead><CardTitle>Description</CardTitle></CardHead>
                  <CardBody $dim>No description provided</CardBody>
                </Card>
              </Cards>
              <ListPane>
                <ListScroll>
                  <Table>
                    <thead><tr><Th $w="130px">Name</Th><Th $w="55px">Order</Th><Th $w="60px">Action</Th><Th>Shortcut</Th></tr></thead>
                    <tbody><tr><Td><NameCell><CalcIcon />calc1</NameCell></Td><Td>1</Td><Td>Update</Td><Td>%DesktopDir%</Td></tr></tbody>
                  </Table>
                </ListScroll>
                <HScroll $end><ScrollArrow /></HScroll>
              </ListPane>
            </BlueRow>
          </Blue>
          <BottomTabs>
            <BottomTab><Slant kind="start" /><BottomTabText $on>Preferences</BottomTabText><Slant /></BottomTab>
            <BottomTab><BottomTabText>Extended</BottomTabText></BottomTab>
            <BottomRest />
          </BottomTabs>
        </Detail>
      </Panes>
      <Status>Last changed: 9/14/2027 4:14:23 PM</Status>
      <StatusRest />
    </Window>
  );
}

function PropertiesDialog() {
  return (
    <Dialog role="dialog" aria-label="calc1 Properties">
      <DialogTitle>
        <span>calc1 Properties</span>
        <IconButton aria-label="Close dialog"><Cross c="#111" w={1.2} /></IconButton>
      </DialogTitle>
      <DialogTabs><DialogTab $on>General</DialogTab><DialogTab>Common</DialogTab></DialogTabs>
      <Page onSubmit={e => e.preventDefault()}>
        <HeadGroup>
          <Field $pic>
            <FlagPage w={32} h={34} />
            <Label htmlFor="action">Action:</Label>
            <SelectBox id="action" value="Update" />
          </Field>
        </HeadGroup>
        <Group>
          <TextField id="name" label="Name:" value="calc1" browse disabled />
          <SelectField id="type" label="Target type:" value="File System Object" />
          <SelectField id="loc" label="Location:" value="Desktop" />
        </Group>
        <Group>
          <TextField id="path" label="Target path:" value="C:\Windows\System32\calc.exe" browse />
          <TextField id="args" label="Arguments:" />
        </Group>
        <Group>
          <TextField id="start" label="Start in:" browse />
          <TextField id="key" label="Shortcut key:" value="None" tight />
          <SelectField id="run" label="Run:" value="Normal Window" />
          <TextField id="comment" label="Comment:" />
        </Group>
        <Group>
          <TextField id="icon" label="Icon file path:" value="C:\Windows\System32\calc.exe" browse />
          <TextField id="index" label="Icon index:" value="0" />
        </Group>
      </Page>
      <Footer>
        <PushButton $main>OK</PushButton>
        <PushButton>Cancel</PushButton>
        <PushButton disabled>Apply</PushButton>
        <PushButton>Help</PushButton>
      </Footer>
    </Dialog>
  );
}

const CloseTab = () => (
  <IconButton aria-label="Close tab"><Cross s={9} c="#b9bbbe" w={1.6} /></IconButton>
);

export default function App() {
  return (
    <Shell>
      <Global />
      <HostTitle>
        <Svg w={8} h={8}><path d="M0 5h8" stroke="#222" /></Svg>
        <Svg w={8} h={8}><path d="M.5 1.500h6v6h-6z" stroke="#222" /></Svg>
      </HostTitle>
      <HostBar>
        <HostMenu>
          <CutMenuItem>льная машина</CutMenuItem>
          <HostMenuItem>Вкладки</HostMenuItem>
          <HostMenuItem>Справка</HostMenuItem>
        </HostMenu>
        <HostSep $before={1} $after={15} />
        <HostTool $w={12} aria-label="Pause"><PauseIcon /></HostTool>
        <HostTool $w={30} aria-label="Power options"><Caret /></HostTool>
        <HostSep $before={1} $after={8} />
        <HostTool $w={26} aria-label="Send keys"><SendKeys /></HostTool>
        <HostSep $before={8} $after={5} />
        <HostTool aria-label="Take snapshot"><Clock kind="add" /></HostTool>
        <HostTool aria-label="Revert snapshot"><Clock kind="back" tone="#b8b8b8" /></HostTool>
        <HostTool aria-label="Manage snapshots"><Clock kind="manage" /></HostTool>
        <HostSep $before={6} $after={7} />
        <HostTool $on aria-label="Sidebar"><Frame d="M1.500 1.500h15v15h-15zM6.500 1.500v15" /></HostTool>
        <HostTool aria-label="Thumbnail bar"><Frame d="M1.500 1.500h15v14h-15zM1.500 10.500h15" /></HostTool>
        <HostTool aria-label="Full screen"><Frame d="M.7 5V.7H5M13 .7h4.300V5M17.300 13v4.300H13M5 17.300H.7V13M4.500 4.500h9v9h-9z" /></HostTool>
        <HostTool aria-label="Unity"><Unity /></HostTool>
        <HostSep $before={6} $after={6} />
        <HostTool $on aria-label="Console"><Frame d="M.7.700h16.600v16.600H.7zM4.500 5.500L8 9l-3.500 3.500M9 12.500h4.500" /></HostTool>
        <HostSep $before={6} />
      </HostBar>
      <Main>
        <Side>
          <Svg w={4} h={7}><path d="M-4 0l7 7M3 0l-7 7" stroke="#111" strokeWidth="1.500" /></Svg>
          <SideBox><Svg w={4} h={18}><path d="M-3 8h6l-3 4z" fill="#111" /></Svg></SideBox>
          <SidePanel />
        </Side>
        <Viewer>
          <Tabs>
            <Tab $w={99}><TabLabel><HomeIcon />Главная</TabLabel><CloseTab /></Tab>
            <Tab $w={109}><TabLabel $gap={6}><ServerIcon />10.54.6.62</TabLabel><CloseTab /></Tab>
            <Tab $w={76}><TabLabel><VmIcon />CLI1</TabLabel><CloseTab /></Tab>
            <Tab $w={73} $on><TabLabel><VmIcon />DC1</TabLabel><CloseTab /></Tab>
          </Tabs>
          <Desktop>
            <DesktopIcon><RecycleBin />Recycle Bin</DesktopIcon>
            <PolicyWindow />
            <PropertiesDialog />
          </Desktop>
        </Viewer>
      </Main>
    </Shell>
  );
}
